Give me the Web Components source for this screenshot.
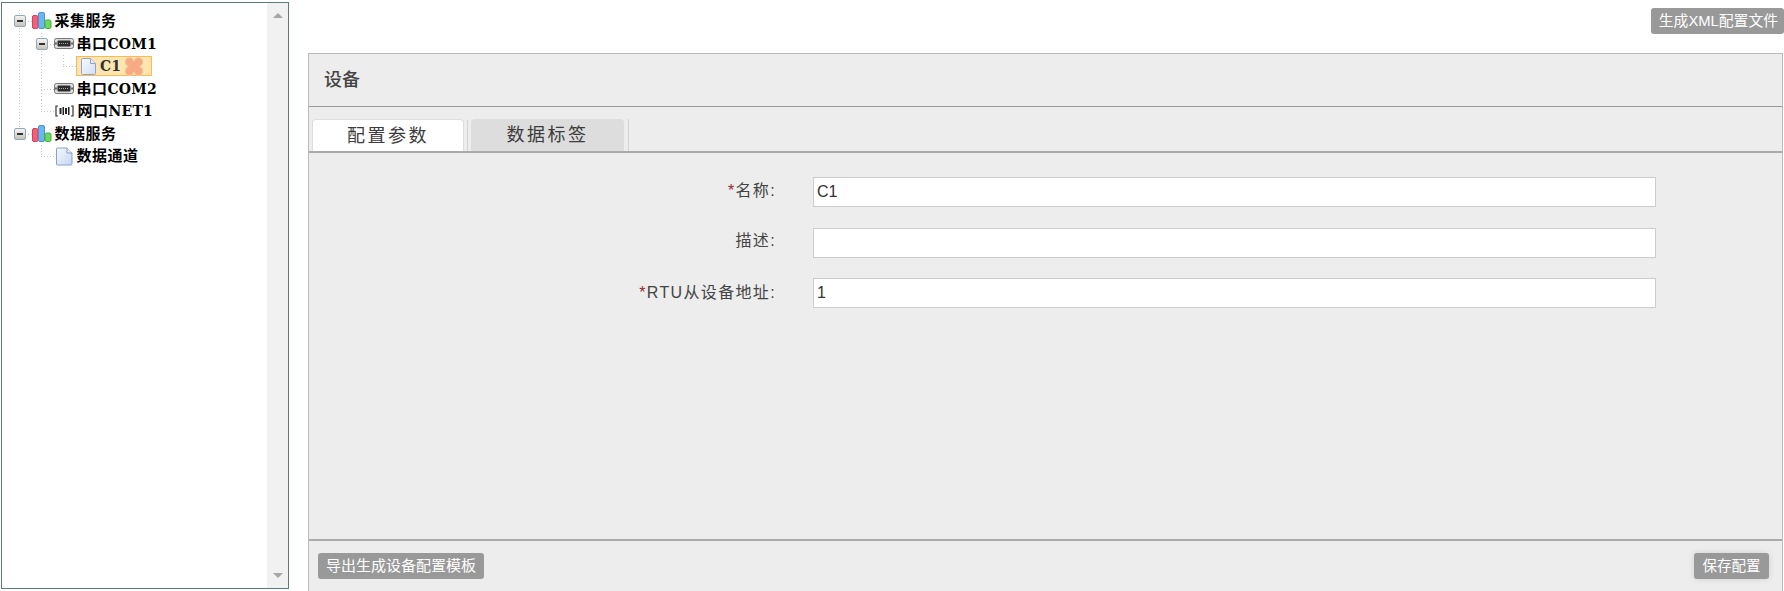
<!DOCTYPE html>
<html lang="zh">
<head>
<meta charset="utf-8">
<title>设备配置</title>
<style>
html, body { margin: 0; height: 591px; overflow: hidden; background: #fff; }
</style>
</head>
<body>
<config-page>
  <tree-box slot="tree">
    <tree-node icon="chart" label="采集服务" toggle>
      <tree-node icon="port" label="串口COM1" toggle>
        <tree-node icon="doc-small" label="C1" selected last></tree-node>
      </tree-node>
      <tree-node icon="port" label="串口COM2"></tree-node>
      <tree-node icon="net" label="网口NET1" last></tree-node>
    </tree-node>
    <tree-node icon="chart" label="数据服务" toggle last>
      <tree-node icon="doc" label="数据通道" last></tree-node>
    </tree-node>
  </tree-box>

  <flat-button slot="action" style="font-size:14.8px;padding:0 6px 0 8px">生成XML配置文件</flat-button>

  <device-panel slot="panel" title="设备">
    <tab-bar slot="tabs">
      <tab-item active>配置参数</tab-item>
      <tab-item>数据标签</tab-item>
    </tab-bar>
    <form-row required label="名称:" value="C1" nudge="7"></form-row>
    <form-row label="描述:" nudge="8"></form-row>
    <form-row required label="RTU从设备地址:" value="1" nudge="5"></form-row>
    <flat-button slot="footer-left" style="padding:0 7.5px 0 8px">导出生成设备配置模板</flat-button>
    <flat-button slot="footer-right" shadow style="font-size:14.5px;padding:0 8.5px">保存配置</flat-button>
  </device-panel>
</config-page>

<script>
const CJK_SANS = '"Liberation Sans", "Noto Sans CJK SC", sans-serif';
const CJK_SERIF = '"DejaVu Serif", "Noto Sans CJK SC", serif';

const ICONS = {
  chart: `<svg width="20" height="18" viewBox="0 0 20 18">
    <rect x="0.5" y="3.5" width="5.500" height="13" rx="1.500" fill="#f2607a" stroke="#d83c58"/>
    <rect x="6.5" y="0.5" width="6" height="16" rx="1.500" fill="#6cb6ec" stroke="#4a94d0"/>
    <rect x="13" y="8" width="6" height="8.500" rx="1.500" fill="#6cd85c" stroke="#44b03c"/>
  </svg>`,
  port: `<svg width="20" height="11" viewBox="0 0 20 11">
    <rect x="0.5" y="0.5" width="19" height="10" rx="2" fill="#dcdcdc" stroke="#777"/>
    <rect x="3.500" y="2.500" width="13" height="6" rx="1" fill="#2c2c2c"/>
    <path d="M5 5.500h10" stroke="#aaa" stroke-dasharray="1 1"/>
    <rect x="1.200" y="4.500" width="1.500" height="2" fill="#444"/>
    <rect x="17.300" y="4.500" width="1.500" height="2" fill="#444"/>
  </svg>`,
  net: `<svg width="21" height="12" viewBox="-1.500 -1 21 12">
    <path d="M2.500 0H.5v10h2M15.500 0h2v10h-2" fill="none" stroke="#333" stroke-width="1.200"/>
    <path d="M4 2h2v6H4zM7 1h1.500v8H7zM9.500 2h2v6h-2zM12.500 1H14v8h-1.500z" fill="#222"/>
  </svg>`,
  doc: `<svg width="20" height="19" viewBox="-2 0 20 19">
    <defs><linearGradient id="p" x1="0" y1="0" x2="1" y2="1"><stop offset="0" stop-color="#f6f9fe"/><stop offset="1" stop-color="#c4d6f2"/></linearGradient></defs>
    <path d="M1.500 1h9.500l5 5v10.500a1.500 1.500 0 0 1-1.500 1.500h-13A1 1 0 0 1 .5 17V2A1 1 0 0 1 1.500 1z" fill="url(#p)" stroke="#8aa0c8"/>
    <path d="M11 1v5h5" fill="#e8eef9" stroke="#8aa0c8"/>
  </svg>`,
  'doc-small': `<svg width="16" height="17" viewBox="-1 0 16 17">
    <defs><linearGradient id="q" x1="0" y1="0" x2="1" y2="1"><stop offset="0" stop-color="#f8fbff"/><stop offset="1" stop-color="#d0dff5"/></linearGradient></defs>
    <path d="M1.500 .5h8l5 5v10a1 1 0 0 1-1 1h-12a1 1 0 0 1-1-1V1.500a1 1 0 0 1 1-1z" fill="url(#q)" stroke="#90a4cc"/>
    <path d="M9.500 .5v5h5" fill="#e8eef9" stroke="#90a4cc"/>
  </svg>`,
  remove: `<svg class="rm" width="20" height="19" viewBox="0 0 20 19">
    <g fill="#f6ab84" stroke="#fbd0a8">
      <circle cx="5.500" cy="5" r="4.500"/><circle cx="14.500" cy="5" r="4.500"/><circle cx="5.500" cy="14" r="4.500"/><circle cx="14.500" cy="14" r="4.500"/>
    </g>
    <circle cx="10" cy="9.500" r="5.500" fill="#f6ab84"/>
  </svg>`
};

class ConfigPage extends HTMLElement {
  constructor() {
    super();
    this.attachShadow({ mode: 'open' }).innerHTML = `
      <style>
        :host { display: flex; height: 591px; box-sizing: border-box; padding: 2px 0 0 1px; overflow: hidden; font-family: ${CJK_SANS}; }
        .main { flex: 1; margin-left: 19px; min-width: 0; display: flex; flex-direction: column; }
        .action { display: flex; justify-content: flex-end; padding-top: 6px; height: 45px; flex: none; }
      </style>
      <slot name="tree"></slot>
      <div class="main">
        <div class="action"><slot name="action"></slot></div>
        <slot name="panel"></slot>
      </div>`;
  }
}

class TreeBox extends HTMLElement {
  constructor() {
    super();
    this.attachShadow({ mode: 'open' }).innerHTML = `
      <style>
        :host { display: flex; flex: none; width: 288px; height: 587px; box-sizing: border-box; border: 1px solid #5f7a78; background: #fff; }
        .list { flex: 1; padding: 7px 0 0 9px; }
        .bar { width: 21px; background: #f1f1f1; display: flex; flex-direction: column; justify-content: space-between; align-items: center; padding: 10px 0; box-sizing: border-box; }
        .up { width: 0; height: 0; border: 5px solid transparent; border-top: 0; border-bottom: 5px solid #a6a6a6; }
        .down { width: 0; height: 0; border: 5px solid transparent; border-bottom: 0; border-top: 5px solid #a6a6a6; }
      </style>
      <div class="list"><slot></slot></div>
      <div class="bar"><span class="up"></span><span class="down"></span></div>`;
  }
}

class TreeNode extends HTMLElement {
  constructor() {
    super();
    this.attachShadow({ mode: 'open' });
  }

  connectedCallback() {
    const label = (this.getAttribute('label') || '').replace(/[A-Za-z0-9]+/, '<span class="lat">$&</span>');
    const icon = ICONS[this.getAttribute('icon')] || '';
    const selected = this.hasAttribute('selected');
    const toggle = this.hasAttribute('toggle');
    this.shadowRoot.innerHTML = `
      <style>
        :host { display: block; font: bold 15px/22.5px ${CJK_SERIF}; color: #000; white-space: nowrap;
          background-image:
            repeating-linear-gradient(to bottom, #c4c4c4 0 1px, transparent 1px 3px),
            repeating-linear-gradient(to right, #c4c4c4 0 1px, transparent 1px 3px);
          background-repeat: no-repeat;
          background-size: 1px 100%, 14px 1px;
          background-position: 8px 0, 8px 11px; }
        :host([last]) { background-size: 1px 11px, 14px 1px; }
        .row { display: flex; align-items: center; height: 22.5px; }
        .gutter { flex: none; width: 21px; display: flex; padding-left: 3px; box-sizing: border-box; }
        .toggle { width: 12px; height: 12px; box-sizing: border-box; border: 1px solid #8fa6c0; border-radius: 2px; background: linear-gradient(#f4f4f0, #c8c4b8); display: flex; align-items: center; justify-content: center; }
        .toggle i { width: 6px; height: 2px; background: #333; }
        .label { display: flex; align-items: center; gap: 2.5px; height: 22.5px; box-sizing: border-box; }
        .text { letter-spacing: .5px; }
        .lat { font-size: 14px; letter-spacing: .2px; }
        .sel { height: 20px; padding: 0 7px 0 3px; background: #ffe6b0; border: 1px solid #ffb951; box-sizing: border-box; color: #333; gap: 4px; }
        .children { margin-left: 22px; }
        svg { display: block; flex: none; }
        .rm { margin-left: -1px; }
      </style>
      <div class="row">
        <div class="gutter">${toggle ? '<span class="toggle"><i></i></span>' : ''}</div>
        <div class="label ${selected ? 'sel' : ''}">
          ${icon}<span class="text">${label}</span>${selected ? ICONS.remove : ''}
        </div>
      </div>
      <div class="children"><slot></slot></div>`;
  }
}

class FlatButton extends HTMLElement {
  constructor() {
    super();
    this.attachShadow({ mode: 'open' }).innerHTML = `
      <style>
        :host { display: inline-flex; align-items: center; height: 26px; box-sizing: border-box; padding: 0 8px; background: #999; color: #fff; border-radius: 3px; font: 15px/26px "Liberation Sans", "Noto Sans CJK SC", sans-serif; white-space: nowrap; }
        :host([shadow]) { box-shadow: 0 0 6px rgba(0,0,0,.12); }
      </style>
      <slot></slot>`;
  }
}

class DevicePanel extends HTMLElement {
  constructor() {
    super();
    const title = this.getAttribute('title') || '';
    this.attachShadow({ mode: 'open' }).innerHTML = `
      <style>
        :host { display: flex; flex-direction: column; flex: none; height: 539px; margin-right: 1px; box-sizing: border-box; border: 1px solid #bbb; background: #ededed; }
        .title { height: 53px; flex: none; box-sizing: border-box; border-bottom: 1px solid #999; padding-left: 15px; font: 500 18px/52px ${CJK_SERIF}; color: #444; }
        .form { flex: 1; min-height: 0; padding-top: 24px; display: flex; flex-direction: column; gap: 20.5px; }
        .footer { height: 52px; flex: none; box-sizing: border-box; border-top: 2px solid #aaa; display: flex; justify-content: space-between; padding: 12px 13px 0 9px; }
      </style>
      <div class="title">${title}</div>
      <slot name="tabs"></slot>
      <div class="form"><slot></slot></div>
      <div class="footer"><slot name="footer-left"></slot><slot name="footer-right"></slot></div>`;
  }
}

class TabBar extends HTMLElement {
  constructor() {
    super();
    this.attachShadow({ mode: 'open' }).innerHTML = `
      <style>
        :host { display: flex; flex: none; height: 46px; box-sizing: border-box; padding: 12px 0 0 3px; border-bottom: 2px solid #aaa; gap: 7px; }
      </style>
      <slot></slot>`;
  }
}

class TabItem extends HTMLElement {
  constructor() {
    super();
    this.attachShadow({ mode: 'open' }).innerHTML = `
      <style>
        :host { display: block; width: 153px; height: 32px; box-sizing: border-box; border-radius: 4px 4px 0 0; background: #ddd; color: #3c3c3c; text-align: center; font: 18px/31px ${CJK_SERIF}; letter-spacing: 2.500px; position: relative; }
        :host([active]) { width: 152px; background: #fff; border: 1px solid #ddd; border-bottom: 0; }
        :host::after { content: ""; position: absolute; right: -5px; top: 0; bottom: 0; width: 1px; background: #d4d4d4; }
      </style>
      <slot></slot>`;
  }
}

class FormRow extends HTMLElement {
  constructor() {
    super();
    const label = this.getAttribute('label') || '';
    const value = this.getAttribute('value') || '';
    const nudge = this.getAttribute('nudge') || 0;
    this.attachShadow({ mode: 'open' }).innerHTML = `
      <style>
        :host { display: flex; align-items: center; height: 30px; color: #444; font: 16px "Liberation Sans", "Noto Sans CJK SC", sans-serif; }
        label { width: 467px; flex: none; text-align: right; white-space: nowrap; padding-bottom: ${nudge}px; letter-spacing: 1.350px; }
        b { font-weight: normal; color: #a02a2a; }
        input { margin-left: 37px; width: 843px; height: 30px; box-sizing: border-box; border: 1px solid #ccc; background: #fff; padding: 0 3px; font: 16px "Liberation Sans", sans-serif; color: #333; outline: none; }
      </style>
      <label>${this.hasAttribute('required') ? '<b>*</b>' : ''}${label}</label>
      <input type="text" value="${value}">`;
  }
}

customElements.define('config-page', ConfigPage);
customElements.define('tree-box', TreeBox);
customElements.define('tree-node', TreeNode);
customElements.define('flat-button', FlatButton);
customElements.define('device-panel', DevicePanel);
customElements.define('tab-bar', TabBar);
customElements.define('tab-item', TabItem);
customElements.define('form-row', FormRow);
</script>
</body>
</html>
